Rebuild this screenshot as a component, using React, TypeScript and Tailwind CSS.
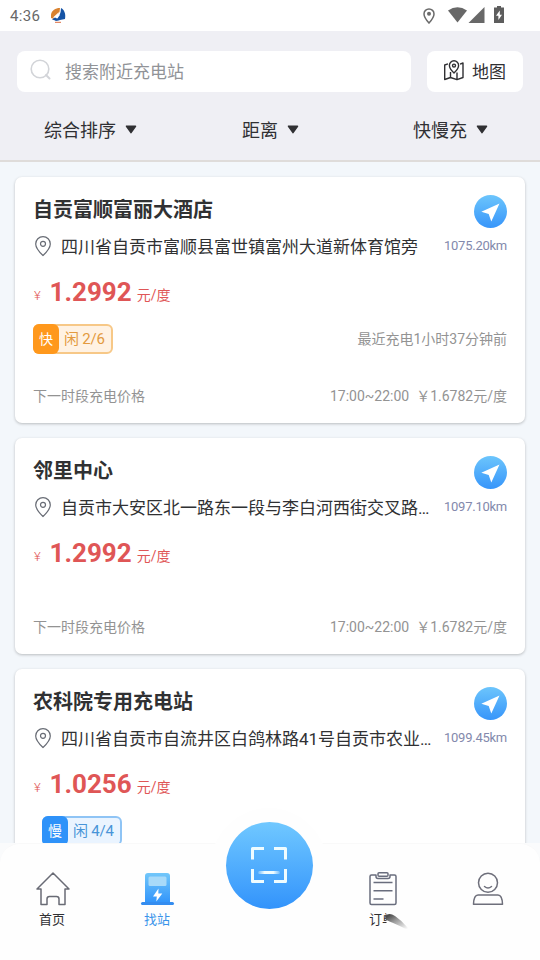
import { type FC, type ReactNode } from 'react';

interface Station {
  name: string;
  address: string;
  distance: string;
  price: string;
  badge?: { kind: 'fast' | 'slow'; label: string; free: string };
  lastCharge?: string;
}

const stations: Station[] = [
  {
    name: '自贡富顺富丽大酒店',
    address: '四川省自贡市富顺县富世镇富州大道新体育馆旁',
    distance: '1075.20km',
    price: '1.2992',
    badge: { kind: 'fast', label: '快', free: '闲 2/6' },
    lastCharge: '最近充电1小时37分钟前',
  },
  {
    name: '邻里中心',
    address: '自贡市大安区北一路东一段与李白河西街交叉路…',
    distance: '1097.10km',
    price: '1.2992',
  },
  {
    name: '农科院专用充电站',
    address: '四川省自贡市自流井区白鸽林路41号自贡市农业…',
    distance: '1099.45km',
    price: '1.0256',
    badge: { kind: 'slow', label: '慢', free: '闲 4/4' },
  },
];

const StatusBar: FC = () => (
  <div className="h-[31px] flex-shrink-0 bg-white flex items-center justify-between pl-[10px] pr-[36px] text-[#686868]">
    <div className="flex items-center">
      <span className="w-[41px] text-[15px] leading-[20px] tracking-[0.3px]">4:36</span>
      <svg width="15" height="16" viewBox="0 0 15 16" className="mb-[2px]">
        <path d="M0 11C-1 5 3 1 9 1L8.500 5 3 12Z" fill="#d9822f" />
        <path d="M10 1C13.500 3 15 7 14 12L4 14Q10 9 10 1Z" fill="#1553a5" />
        <path d="M2 10.500 8 5 6.500 8.500 9 8 5 11.500Z" fill="#fff" />
        <path d="M1 12.500 4 10.500 9 13 5 13.800Z" fill="#1553a5" />
        <path d="M4 15.300H10" stroke="#db6d43" strokeWidth="1" />
      </svg>
    </div>
    <div className="flex items-center">
      <svg width="12" height="16" viewBox="0 0 12 16" className="mr-[13px]">
        <path d="M6 .9a5 5 0 0 0-5 5C1 9.300 6 15 6 15s5-5.700 5-9.100a5 5 0 0 0-5-5Z" fill="none" stroke="#6b6b6b" strokeWidth="1.500" />
        <circle cx="6" cy="5.800" r="2" fill="#6b6b6b" />
      </svg>
      <svg width="19" height="16" viewBox="0 0 19 16" className="mr-[1px] mb-[1px]">
        <path d="M0 3.500Q9.500-3 19 3.500L9.500 15.500Z" fill="#686868" />
      </svg>
      <svg width="17" height="16" viewBox="0 0 17 16" className="mr-[9px] mb-[1px]">
        <path d="M16.500 0V16H.5Z" fill="#686868" />
      </svg>
      <svg width="10" height="17" viewBox="0 0 10 17" className="mb-[2px]">
        <path d="M3 0h4v1.500h3V17H0V1.500h3Z" fill="#5d5d5d" />
        <path d="M5.800 4.500 2 9.800h2.400V14L8 8.800H5.800Z" fill="#fff" />
      </svg>
    </div>
  </div>
);

const SortItem: FC<{ label: string; className: string }> = ({ label, className }) => (
  <div className={`flex items-center ${className}`}>
    <span className="text-[18px] leading-[26px] text-[#303033]">{label}</span>
    <svg width="12" height="9" viewBox="0 0 12 9" className="ml-[9px] mb-[4px]">
      <path d="M1.500 1.200h9L6 7.600Z" fill="#303033" stroke="#303033" strokeWidth="1.500" strokeLinejoin="round" />
    </svg>
  </div>
);

const Header: FC = () => (
  <header className="h-[131px] flex-shrink-0 bg-[#efeff4] border-b-2 border-[#dfdcda] pt-[20px]">
    <div className="flex gap-[16px] px-[17px]">
      <div className="h-[41px] w-[394px] bg-white rounded-[8px] flex items-center pl-[13px]">
        <svg width="22" height="22" viewBox="0 0 22 22" fill="none" stroke="#d2d4d8" className="mb-[3px]">
          <circle cx="10" cy="10" r="8.800" strokeWidth="1.600" />
          <path d="m16 16 3.500 3.500" strokeWidth="2" strokeLinecap="round" />
        </svg>
        <span className="ml-[13px] pt-[2px] text-[17px] leading-[25px] text-[#919397]">搜索附近充电站</span>
      </div>
      <div className="h-[41px] w-[96px] bg-white rounded-[8px] flex items-center pl-[16px]">
        <svg width="22" height="21" viewBox="0 0 22 21" fill="none" stroke="#303033" strokeWidth="1.400" strokeLinejoin="round" className="mb-[2px]">
          <path d="M5 3.800 1.700 5V19.500L7.500 17.500l6.500 2.200 6-2.200V3L17 4.200M7.500 17.500v-5.500M14 19.700V12.500" />
          <path d="M11 .8a4.600 4.600 0 0 0-4.600 4.800C6.400 8.800 11 13 11 13s4.600-4.200 4.600-7.400A4.600 4.600 0 0 0 11 .8Z" />
          <circle cx="11" cy="5.600" r="1.500" />
        </svg>
        <span className="ml-[7px] pt-[2px] text-[17px] leading-[25px] text-[#303033]">地图</span>
      </div>
    </div>
    <div className="mt-[26px] flex">
      <SortItem label="综合排序" className="w-[198px] pl-[44px]" />
      <SortItem label="距离" className="w-[171px] pl-[44px]" />
      <SortItem label="快慢充" className="pl-[44px]" />
    </div>
  </header>
);

const Badge: FC<{ badge: NonNullable<Station['badge']> }> = ({ badge }) => {
  const fast = badge.kind === 'fast';
  return (
    <div className={`w-[80px] h-[30px] flex rounded-[6px] border-2 ${fast ? 'bg-[#fff2e3] border-[#f7c887]' : 'ml-[9px] bg-[#eaf4ff] border-[#8fc4f5]'}`}>
      <span className={`-m-[2px] w-[26px] h-[30px] rounded-[6px] text-center text-[14px] leading-[30px] text-white ${fast ? 'bg-[#ff981c]' : 'bg-[#2e92f9]'}`}>
        {badge.label}
      </span>
      <span className={`ml-[7px] text-[15px] leading-[26px] tracking-[-0.2px] whitespace-nowrap ${fast ? 'text-[#e39a3e]' : 'text-[#4894d8]'}`}>{badge.free}</span>
    </div>
  );
};

const StationCard: FC<{ station: Station }> = ({ station }) => (
  <section className="flex-shrink-0 bg-white rounded-[7px] shadow-[0_1px_3px_rgba(0,0,0,0.24)] px-[18px] pt-[17px] pb-[17px]">
    <div className="flex justify-between">
      <div>
        <h2 className="pt-[1px] text-[20px] leading-[30px] font-bold text-[#303133]">{station.name}</h2>
        <div className="mt-[10px] flex items-center">
          <svg width="18" height="22" viewBox="0 0 18 22" fill="none" stroke="#686c75" strokeWidth="1.200" className="ml-[1px] mb-[2px]">
            <path d="M9 1.600a7.300 7.300 0 0 0-7.300 7.300C1.700 13.500 9 20.500 9 20.500s7.300-7 7.300-11.600A7.300 7.300 0 0 0 9 1.600Z" />
            <circle cx="9" cy="8.800" r="2.500" />
          </svg>
          <span className="ml-[9px] text-[17px] leading-[24px] text-[#303133] whitespace-nowrap">{station.address}</span>
        </div>
      </div>
      <div className="w-0 flex flex-col items-end pt-[1px]">
        <svg width="33" height="33" viewBox="0 0 33 33" className="flex-shrink-0">
          <defs>
            <linearGradient id="goFill" x1="0" y1="0" x2="0" y2="1">
              <stop offset="0" stopColor="#6cc5fc" />
              <stop offset="1" stopColor="#3795fa" />
            </linearGradient>
          </defs>
          <circle cx="16.500" cy="16.500" r="16.500" fill="url(#goFill)" />
          <path d="M25.500 8.500 7.300 16.700 14.700 19 17.300 26.500Z" fill="#fff" />
        </svg>
        <span className="mt-[9px] text-[13px] leading-[18px] tracking-[-0.25px] text-[#8389ac]">{station.distance}</span>
      </div>
    </div>
    <div className="mt-[18px] h-[30px] flex items-start text-[#df5656]">
      <span className="w-[16px] pl-[1px] pt-[4px] text-[13px] leading-[30px] font-light">¥</span>
      <span className="pl-[0.5px] text-[26px] leading-[30px] font-bold">{station.price}</span>
      <span className="ml-[5px] pt-[3px] text-[14px] leading-[30px]">元/度</span>
    </div>
    <div className="mt-[17px] flex items-center justify-between">
      {station.badge && <Badge badge={station.badge} />}
      {station.lastCharge && <span className="text-[14px] leading-[20px] text-[#939393]">{station.lastCharge}</span>}
    </div>
    <div className="mt-[32px] flex justify-between text-[14px] leading-[20px] text-[#939393]">
      <span>下一时段充电价格</span>
      <span className="flex gap-[7px]">
        <span>17:00~22:00</span>
        <span>￥1.6782元/度</span>
      </span>
    </div>
  </section>
);

const TabItem: FC<{ label?: string; active?: boolean; className: string; children: ReactNode }> = ({ label, active, className, children }) => (
  <div className={`w-[60px] flex flex-col items-center ${className}`}>
    {children}
    <span className={`mt-[4px] h-[18px] text-[13px] leading-[18px] ${active ? 'text-[#3993ea]' : 'text-[#303033]'}`}>{label}</span>
  </div>
);

const TabBar: FC = () => (
  <div className="absolute left-0 bottom-0 w-full bg-[#fafbfc]">
    <nav className="relative h-[117px] bg-[#fefefe] rounded-t-[20px] border-t border-[#f9f9f9] pt-[27px] flex">
      <TabItem label="首页" className="ml-[22px]">
        <svg width="36" height="36" viewBox="0 0 36 36" fill="none" stroke="#696b75" strokeWidth="1.500" strokeLinejoin="round" className="ml-[1px]">
          <path d="M18 2 2 18H6v15.500h6V28q0-2.500 2.500-2.500h7Q24 25.500 24 28v5.500h6V18h4Z" />
        </svg>
      </TabItem>
      <TabItem label="找站" active className="ml-[45px]">
        <svg width="36" height="36" viewBox="0 0 36 36" className="ml-[1px]">
          <defs>
            <linearGradient id="pumpFill" x1="0" y1="0" x2="0" y2="1">
              <stop offset="0" stopColor="#72c7fa" />
              <stop offset="1" stopColor="#3396fb" />
            </linearGradient>
          </defs>
          <path d="M5 5q0-3 3-3h19q3 0 3 3v26H5Z" fill="url(#pumpFill)" />
          <rect x="8.500" y="5.500" width="18" height="9.500" rx="1.500" fill="#a8daf9" />
          <rect x="1" y="31" width="33" height="3" rx="1.500" fill="#348df0" />
          <path d="M18.500 17.500 13 25.500h3.800l-.5 5 6-8h-4Z" fill="#fff" />
        </svg>
      </TabItem>
      <TabItem label="订单" className="ml-[165px]">
        <svg width="36" height="36" viewBox="0 0 36 36" fill="none" stroke="#696d7d" strokeWidth="1.500" strokeLinejoin="round" className="ml-[1px]">
          <path d="M11 4H6.500Q5 4 5 5.500V32q0 1.500 1.500 1.500h23Q31 33.500 31 32V5.500Q31 4 29.500 4H25v1.500Q25 7.500 23 7.500H13Q11 7.500 11 5.500Z" />
          <rect x="13" y="1.800" width="10" height="3.500" rx="1" />
          <path d="M8.500 11.500h19M8.500 19.700h19M8.500 28h10" />
        </svg>
      </TabItem>
      <TabItem className="ml-[45px]">
        <svg width="36" height="36" viewBox="0 0 36 36" fill="none" stroke="#6e6f7b" strokeWidth="1.500" strokeLinecap="round" strokeLinejoin="round" className="ml-[1px]">
          <circle cx="18" cy="11.800" r="9.500" />
          <path d="M14.500 15.500q3.500 2.800 7 0M3.500 33.300h29q-.3-9.300-4.500-9.300H8q-4.200 0-4.500 9.300Z" />
        </svg>
      </TabItem>
      {/* shadow lying over the order label */}
      <svg width="40" height="36" viewBox="0 0 40 36" className="absolute left-[380px] top-[66px]">
        <defs>
          <linearGradient id="smudge" gradientUnits="userSpaceOnUse" x1="11" y1="4" x2="23" y2="22">
            <stop offset="0" stopColor="#4c4c4c" />
            <stop offset="0.35" stopColor="#979797" />
            <stop offset="1" stopColor="#fefefe" />
          </linearGradient>
          <filter id="soft">
            <feGaussianBlur stdDeviation="0.7" />
          </filter>
        </defs>
        <path d="M6.500 0H30V26H6.500Z" fill="#fefefe" />
        <path d="M5 6Q9 2 15 6T27 17Q30 21 25 18.500T12 12.500 6 10.500Z" fill="url(#smudge)" filter="url(#soft)" />
      </svg>
      <div className="absolute left-[211px] -top-[36px] w-[116px] h-[116px] rounded-full bg-[#fefefe] flex justify-center pt-[14px]">
        <div className="w-[87px] h-[87px] rounded-full bg-linear-to-b from-[#70c8ff] to-[#3293fb] flex items-center justify-center">
          <svg width="36" height="36" viewBox="0 0 36 36" fill="none" stroke="#effcff" strokeWidth="3" strokeLinejoin="round" className="mb-[2px]">
            <defs>
              <linearGradient id="scanLine" x1="0" x2="1" y1="0" y2="0">
                <stop offset="0" stopColor="#effcff" stopOpacity="0.2" />
                <stop offset="0.3" stopColor="#effcff" />
                <stop offset="0.7" stopColor="#effcff" />
                <stop offset="1" stopColor="#effcff" stopOpacity="0.2" />
              </linearGradient>
            </defs>
            <path d="M1.500 12.500V1.500H13M23 1.500H34.500V12.500M1.500 22V34.500H13M23 34.500H34.500V22" />
            <rect x="7" y="24" width="22" height="3" rx="1.500" fill="url(#scanLine)" stroke="none" />
          </svg>
        </div>
      </div>
    </nav>
  </div>
);

export default function App() {
  return (
    <div className="relative w-[540px] h-[960px] overflow-hidden flex flex-col bg-[#f3f7fb] font-[Roboto,'Noto_Sans_CJK_SC',sans-serif]">
      <StatusBar />
      <Header />
      <main className="flex-1 min-h-0 overflow-hidden px-[15px] pt-[15px] flex flex-col gap-[15px]">
        {stations.map((s) => (
          <StationCard key={s.name} station={s} />
        ))}
      </main>
      <TabBar />
    </div>
  );
}
